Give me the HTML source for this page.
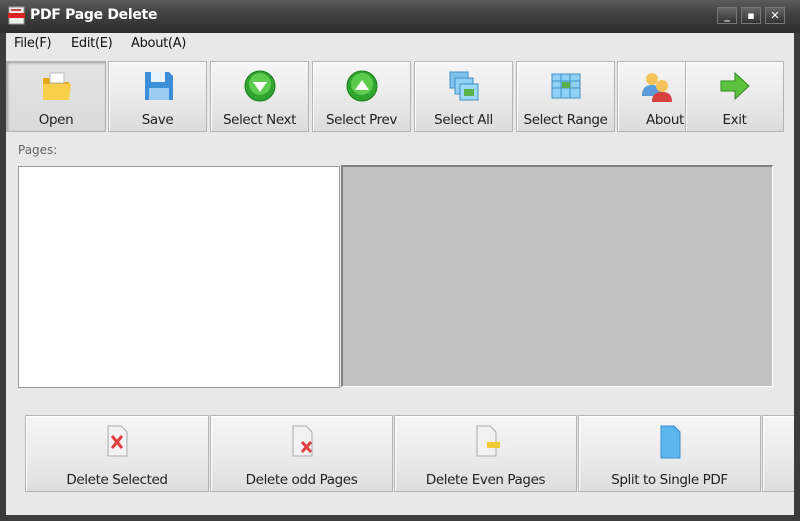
<!DOCTYPE html>
<html><head><meta charset="utf-8"><style>
*{margin:0;padding:0;box-sizing:border-box}
body{width:800px;height:521px;overflow:hidden;background:#3c3c3c;font-family:"DejaVu Sans","Liberation Sans",sans-serif;position:relative}
.title{position:absolute;left:0;top:0;width:800px;height:33px;background:linear-gradient(#5a5a5a,#3e3e3e 50%,#2e2e2e);}
.title .t{position:absolute;left:30px;top:7px;color:#fff;font-size:14px;font-weight:bold;letter-spacing:-0.3px}
.client{position:absolute;left:6px;top:33px;width:788px;height:482px;background:#e8e8e8}
.abs{position:absolute}
.menu{position:absolute;top:36px;font-size:13px;color:#111;letter-spacing:-0.3px}
.tb{position:absolute;top:61px;height:71px;border:1px solid #b4b4b4;background:linear-gradient(#f6f6f6,#e9e9e9 55%,#dcdcdc);box-shadow:inset 1px 1px 0 #fff}
.tb span{position:absolute;left:0;right:0;bottom:3px;text-align:center;font-size:13.5px;color:#222;letter-spacing:-0.4px;white-space:nowrap;overflow:hidden}
.tb svg{position:absolute;left:50%;top:6px;margin-left:-18px}
.bb{position:absolute;top:415px;height:77px;border:1px solid #b4b4b4;background:linear-gradient(#f6f6f6,#ebebeb 55%,#dedede);box-shadow:inset 1px 1px 0 #fff}
.bb span{position:absolute;left:0;right:0;bottom:3px;text-align:center;font-size:13.5px;color:#222;letter-spacing:-0.4px;white-space:nowrap}
.bb svg{position:absolute;left:50%;top:6px;margin-left:-18px}
.wb{position:absolute;top:7px;width:20px;height:17px;border:1px solid #777;background:linear-gradient(#666,#333);color:#fff;font-size:11px;text-align:center;line-height:15px;font-weight:bold}
</style></head><body>
<div class="title">
<svg class="abs" style="left:8px;top:6px" width="18" height="20"><rect x="1" y="1" width="15" height="17" fill="#eee" stroke="#999"/><rect x="0" y="7" width="17" height="5" fill="#d22"/><rect x="3" y="3" width="10" height="2" fill="#c44"/></svg>
<div class="t">PDF Page Delete</div>
<div class="wb" style="left:717px">_</div>
<div class="wb" style="left:741px">▪</div>
<div class="wb" style="left:765px">✕</div>
</div>
<div class="client"></div>
<div class="menu" style="left:14px">File(F)</div>
<div class="menu" style="left:71px">Edit(E)</div>
<div class="menu" style="left:131px">About(A)</div>

<div class="tb" style="left:6px;width:100px;background:linear-gradient(#e4e4e4,#dadada);box-shadow:inset 1px 1px 2px #999"><svg width="36" height="36"><path d="M5 10h10l3 4h13v18H5z" fill="#e6a81c"/><path d="M5 16h28l-2 16H5z" fill="#f7cf4a"/><rect x="12" y="5" width="14" height="10" fill="#fff" stroke="#bbb"/></svg><span>Open</span></div>
<div class="tb" style="left:108px;width:99px"><svg width="36" height="36"><path d="M5 4h24l4 4v24H5z" fill="#3d8ed8"/><rect x="11" y="4" width="14" height="10" fill="#e8f2fb"/><rect x="9" y="20" width="20" height="12" fill="#9ccbf2"/></svg><span>Save</span></div>
<div class="tb" style="left:210px;width:99px"><svg width="36" height="36"><circle cx="18" cy="18" r="15" fill="#2fa52f" stroke="#1c7d1c"/><circle cx="18" cy="16" r="11" fill="#5dcb4b"/><path d="M11 14h14l-7 10z" fill="#fff"/></svg><span>Select Next</span></div>
<div class="tb" style="left:312px;width:99px"><svg width="36" height="36"><circle cx="18" cy="18" r="15" fill="#2fa52f" stroke="#1c7d1c"/><circle cx="18" cy="16" r="11" fill="#5dcb4b"/><path d="M11 22h14l-7-10z" fill="#fff"/></svg><span>Select Prev</span></div>
<div class="tb" style="left:414px;width:99px"><svg width="36" height="36"><rect x="4" y="4" width="18" height="16" fill="#7cc3ee" stroke="#3f8fc4"/><rect x="9" y="10" width="18" height="16" fill="#8fd0f4" stroke="#3f8fc4"/><rect x="14" y="16" width="18" height="16" fill="#9bd8f6" stroke="#3f8fc4"/><rect x="18" y="21" width="10" height="7" fill="#5ab34a"/></svg><span>Select All</span></div>
<div class="tb" style="left:516px;width:99px"><svg width="36" height="36"><rect x="4" y="6" width="28" height="24" fill="#8fd0f4" stroke="#3f8fc4"/><path d="M4 13h28M4 20h28M13 6v24M22 6v24" stroke="#3f8fc4"/><rect x="14" y="14" width="8" height="6" fill="#5ab34a"/></svg><span>Select Range</span></div>
<div class="tb" style="left:617px;width:69px"><svg width="36" height="36" style="margin-left:-14px"><circle cx="14" cy="11" r="6" fill="#f3c35a"/><path d="M4 28c0-8 4-11 10-11s10 3 10 11z" fill="#5a9ad8"/><circle cx="24" cy="18" r="6" fill="#f3c35a"/><path d="M14 34c0-8 4-10 10-10s10 2 10 10z" fill="#d84040"/></svg><span style="text-align:left;padding-left:28px">About</span></div>
<div class="tb" style="left:685px;width:99px"><svg width="36" height="36"><path d="M4 13h14V5l14 13-14 13v-8H4z" fill="#5cc43c" stroke="#2e8a20"/></svg><span>Exit</span></div>

<div class="abs" style="left:18px;top:143px;font-size:12px;color:#666">Pages:</div>
<div class="abs" style="left:18px;top:166px;width:322px;height:222px;background:#fff;border:1px solid #9a9a9a"></div>
<div class="abs" style="left:341px;top:165px;width:432px;height:222px;background:#c1c1c1;border-top:2px solid #808080;border-left:2px solid #808080;border-right:1px solid #fff;border-bottom:1px solid #fff"></div>

<div class="bb" style="left:25px;width:184px"><svg width="36" height="40"><path d="M9 4h13l6 6v24H9z" fill="#f2f2f2" stroke="#aaa"/><path d="M13 14l10 12M23 14L13 26" stroke="#e04040" stroke-width="3"/></svg><span>Delete Selected</span></div>
<div class="bb" style="left:210px;width:183px"><svg width="36" height="40"><path d="M9 4h13l6 6v24H9z" fill="#f2f2f2" stroke="#aaa"/><path d="M18 20l9 10M27 20l-9 10" stroke="#e04040" stroke-width="3"/></svg><span>Delete odd Pages</span></div>
<div class="bb" style="left:394px;width:183px"><svg width="36" height="40"><path d="M9 4h13l6 6v24H9z" fill="#f2f2f2" stroke="#aaa"/><rect x="19" y="20" width="13" height="6" fill="#f0c830"/></svg><span>Delete Even Pages</span></div>
<div class="bb" style="left:578px;width:183px"><svg width="36" height="40"><path d="M9 4h13l6 6v26H9z" fill="#5ab8ee" stroke="#3a8cc8"/></svg><span>Split to Single PDF</span></div>
<div class="bb" style="left:762px;width:40px"></div>
<div class="abs" style="left:794px;top:33px;width:6px;height:488px;background:#3c3c3c"></div>
<div class="abs" style="left:0;top:515px;width:800px;height:6px;background:#3c3c3c"></div>
</body></html>
